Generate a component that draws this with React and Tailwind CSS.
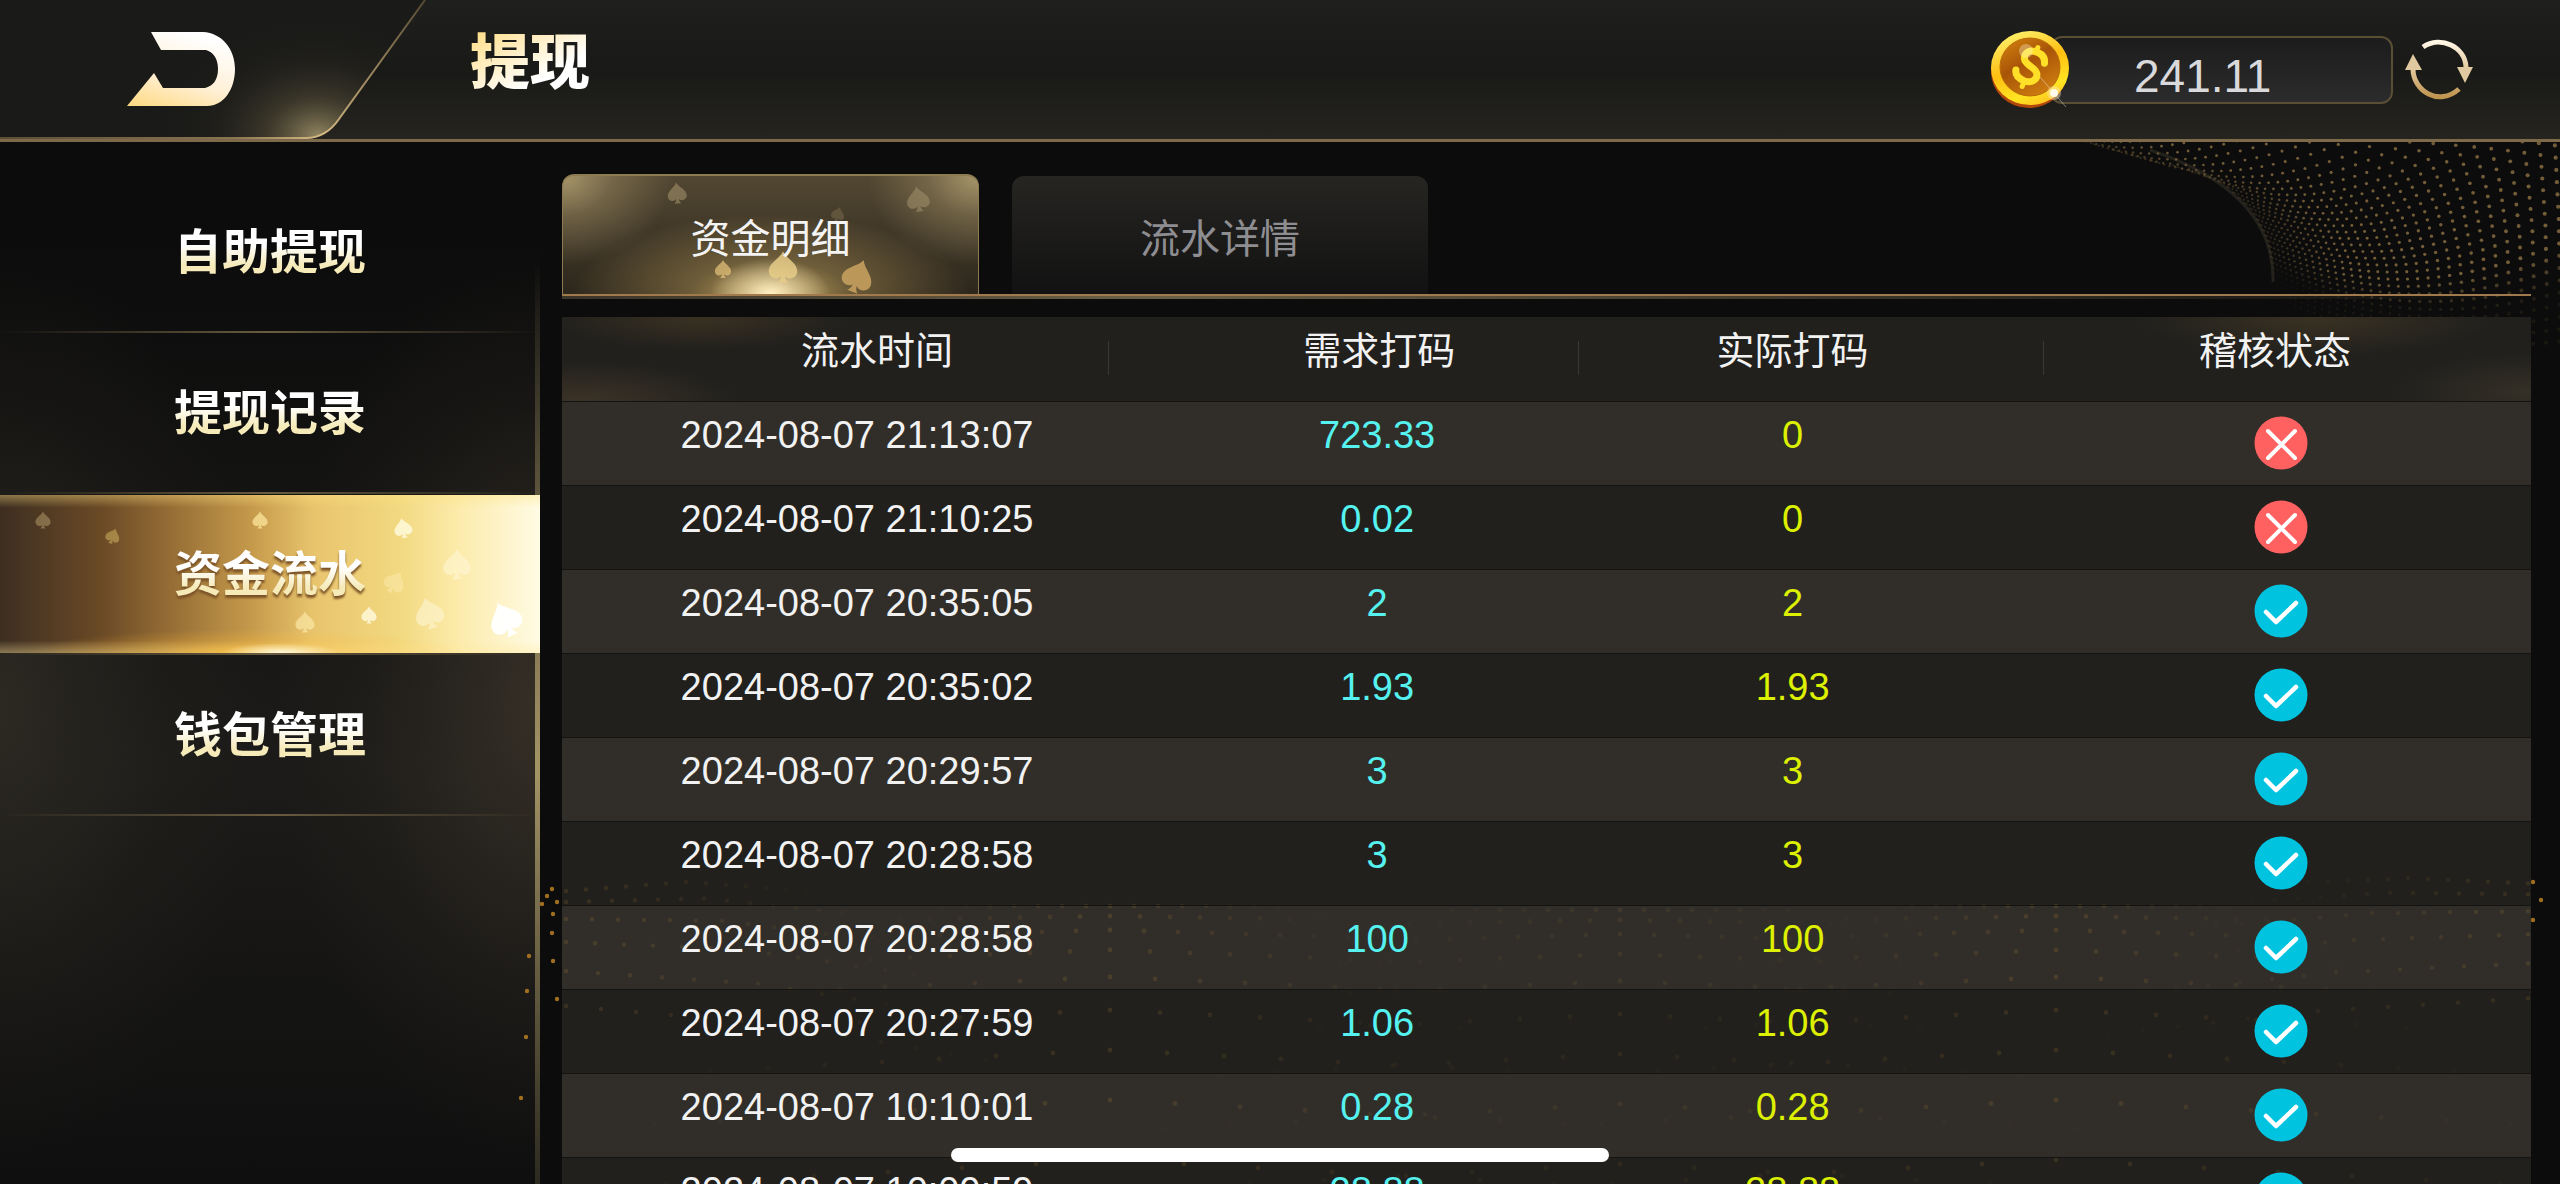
import React from "react";

const SANS = "font-['Liberation_Sans','Noto_Sans_CJK_SC',sans-serif]";

const MENU = [
  { label: "自助提现" },
  { label: "提现记录" },
  { label: "资金流水", active: true },
  { label: "钱包管理" },
];

const ROWS = [
  ["2024-08-07 21:13:07", "723.33", "0", false],
  ["2024-08-07 21:10:25", "0.02", "0", false],
  ["2024-08-07 20:35:05", "2", "2", true],
  ["2024-08-07 20:35:02", "1.93", "1.93", true],
  ["2024-08-07 20:29:57", "3", "3", true],
  ["2024-08-07 20:28:58", "3", "3", true],
  ["2024-08-07 20:28:58", "100", "100", true],
  ["2024-08-07 20:27:59", "1.06", "1.06", true],
  ["2024-08-07 10:10:01", "0.28", "0.28", true],
  ["2024-08-07 10:09:59", "28.88", "28.88", true],
];

const SPADE =
  "M12 1C10 6 2 9 2 15a5 5 0 0 0 8.6 3.4C10.6 20 9.6 22 8.4 23h7.2c-1.2-1-2.2-3-2.2-4.6A5 5 0 0 0 22 15C22 9 14 6 12 1z";

function Spades({ items }) {
  return items.map(([x, y, size, tilt, fill, opacity], i) => (
    <path
      key={i}
      d={SPADE}
      fill={fill}
      opacity={opacity}
      transform={`translate(${x} ${y}) rotate(${tilt}) scale(${size / 21}) translate(-12 -12)`}
    />
  ));
}

/* Dotted mesh that curls in from the top right corner */
const EDGE = [
  [100, 1990], [140, 2080], [160, 2150], [167, 2180], [183, 2223],
  [210, 2252], [240, 2268], [270, 2273], [300, 2270], [340, 2262],
];
function edgeX(y) {
  for (let i = 1; i < EDGE.length; i++) {
    if (y <= EDGE[i][0]) {
      const [y0, x0] = EDGE[i - 1];
      const [y1, x1] = EDGE[i];
      return x0 + ((x1 - x0) * (y - y0)) / (y1 - y0);
    }
  }
  return 2260;
}
function meshDots() {
  const dots = [];
  for (let k = 0; k < 40; k++) {
    const endY = -210 + k * 14;
    const sy = 200 + (endY - 90) / 2.6;
    const sx = edgeX(sy);
    const cy = sy + 48 + (k / 40) * 24;
    for (let n = 0; n <= 36; n++) {
      const t = Math.pow(n / 36, 1.4);
      const x = (1 - t) * (1 - t) * sx + 2 * t * (1 - t) * (sx + 150) + t * t * 2600;
      const y = (1 - t) * (1 - t) * sy + 2 * t * (1 - t) * cy + t * t * endY;
      if (y < 140 || x > 2562) continue;
      const fade = k > 31 ? Math.max(0.15, 1 - (k - 31) * 0.2) : 1;
      dots.push([x - 2060, y - 142, 1.1 + t * 1.1, (0.2 + Math.min(t * 2, 0.5)) * fade]);
    }
  }
  return dots;
}
const MESH = meshDots();

/* Rolling dotted floor along the bottom edge */
function floorDots() {
  const dots = [];
  const rows = [[46, 24], [56, 30], [70, 34], [90, 40], [117, 45], [150, 50], [190, 57], [240, 65], [300, 74]];
  [[1110, 0], [1620, 4], [2056, 0]].forEach(([cx, dy], c) => {
    rows.forEach(([y, gap], r) => {
      for (let j = -7; j <= 7; j++) {
        const fade = Math.max(0, 1 - Math.abs(j) / 8);
        dots.push([cx + j * gap, y + dy + (Math.abs(j) * r) / 2, 2.4, fade * (c === 1 ? 0.5 : 0.9)]);
      }
    });
  });
  for (let r = 0; r < 6; r++) {
    for (let j = 0; j < 13; j++) {
      const y = 22 + r * 8 + r * r * 3;
      const fade = 1 - j / 14;
      const swing = Math.abs(j - 6) * 1.5;
      const left = 566 + j * (20 + r * 3);
      const right = 2528 - j * (20 + r * 3);
      dots.push([left, y + swing + j * r * 0.9, 2.2, fade * 0.9]);
      dots.push([right, y + swing * 0.6 + j * r * 0.6 - 4, 2.2, fade * 0.8]);
    }
  }
  [
    [552, 29], [547, 36], [542, 44], [557, 42], [553, 54], [552, 73], [553, 101], [557, 139],
    [529, 96], [527, 131], [526, 177], [521, 238], [2533, 22], [2541, 40], [2533, 60],
  ].forEach(([x, y]) => dots.push([x, y, 2.2, 0.95]));
  return dots;
}
const FLOOR = floorDots();

function StatusIcon({ ok }) {
  return (
    <svg className="mx-auto block size-[54px]" viewBox="0 0 54 54" role="img" aria-label={ok ? "通过" : "未通过"}>
      <circle cx="27" cy="27" r="26.5" fill={ok ? "#00c3e0" : "#ff6161"} />
      {ok ? (
        <path d="M12 28 22 38 42 19" fill="none" stroke="#fff" strokeWidth="4.500" strokeLinecap="round" strokeLinejoin="round" />
      ) : (
        <path d="M14 15 41 42M41 15 14 42" fill="none" stroke="#fff" strokeWidth="4" strokeLinecap="round" />
      )}
    </svg>
  );
}

function Header() {
  return (
    <header className="relative z-10 flex h-[142px] shrink-0 items-center justify-between border-b-[3px] border-[#7d6a4a] bg-linear-to-b from-[#1f1f1e] via-[#191917] to-[#25241f]">
      <div className="flex h-full items-center">
        <button type="button" aria-label="返回" className="relative h-full w-[430px]">
          <svg className="absolute top-0 left-0 h-[142px] w-[430px]" viewBox="0 0 430 142">
            <defs>
              <radialGradient id="glow" gradientUnits="userSpaceOnUse" cx="318" cy="136" r="150" gradientTransform="translate(0 34) scale(1 .75)">
                <stop offset="0" stopColor="#a8996e" stopOpacity=".85" />
                <stop offset=".35" stopColor="#6b6144" stopOpacity=".4" />
                <stop offset=".7" stopColor="#3a3628" stopOpacity=".15" />
                <stop offset="1" stopColor="#2a2820" stopOpacity="0" />
              </radialGradient>
              <linearGradient id="rim" x1="0" x2="1">
                <stop offset="0" stopColor="#5c4d34" />
                <stop offset=".55" stopColor="#8a7450" />
                <stop offset=".76" stopColor="#d8bb85" />
                <stop offset="1" stopColor="#574a34" />
              </linearGradient>
            </defs>
            <path d="M0 0H425L339 119Q326 138 306 138H0z" fill="#1a1a18" />
            <path d="M0 0H425L339 119Q326 138 306 138H0z" fill="url(#glow)" />
            <path d="M425 0 339 119Q326 138 306 138H0" fill="none" stroke="url(#rim)" strokeWidth="2" />
          </svg>
          <svg className="absolute top-8 left-[127px] h-[75px] w-[108px]" viewBox="0 0 108 75">
            <defs>
              <linearGradient id="arrow" x1=".1" y1="1" x2=".55" y2="0">
                <stop offset="0" stopColor="#ffdb87" />
                <stop offset=".45" stopColor="#fff0d6" />
                <stop offset="1" stopColor="#ffffff" />
              </linearGradient>
            </defs>
            <path
              d="M24 0H76C95 1 108 17 108 37S97 74 80 74H0L27 41 36 56H78C86 54 91 48 91 37S86 20 79 18H34z"
              fill="url(#arrow)"
            />
          </svg>
        </button>
        <h1 className="bg-linear-to-br from-[#ffe08f] from-20% via-[#fff1cd] via-45% to-white to-65% bg-clip-text pb-3 pl-10 text-[60px] leading-[76px] font-black text-transparent">
          提现
        </h1>
      </div>

      <div className="flex items-center gap-3 pr-[87px]">
        <div className="flex items-center">
          <svg className="relative z-10 -mr-5 h-[78px] w-[80px]" viewBox="0 0 80 78" aria-hidden="true">
            <defs>
              <linearGradient id="coinRim" x1=".3" y1="0" x2=".7" y2="1">
                <stop offset="0" stopColor="#fff06a" />
                <stop offset=".45" stopColor="#ffbe12" />
                <stop offset=".8" stopColor="#ffe522" />
                <stop offset="1" stopColor="#ffc020" />
              </linearGradient>
              <linearGradient id="coinFace" x1="0" y1="0" x2=".6" y2="1">
                <stop offset="0" stopColor="#d8860f" />
                <stop offset=".5" stopColor="#a85408" />
                <stop offset="1" stopColor="#cc7a10" />
              </linearGradient>
            </defs>
            <ellipse cx="39" cy="41" rx="38" ry="36" fill="#b2470c" />
            <ellipse cx="40" cy="37" rx="39" ry="37" fill="url(#coinRim)" />
            <ellipse cx="40" cy="36" rx="30" ry="29" fill="url(#coinFace)" stroke="#b86a08" strokeWidth="1" />
            <g transform="rotate(22 40 36)" fill="none" stroke="#ffdf28" strokeLinecap="round">
              <path d="M52 27C50 20 44 19 38 20C31 21 29 28 33 32C38 36 47 35 49 40C52 46 46 51 40 51C33 51 29 48 28 44" strokeWidth="7" />
              <path d="M40 15V20M40 52V57" strokeWidth="5" />
            </g>
            <circle cx="36" cy="20" r="7" fill="#fff8d0" opacity=".35" />
            <path d="M50 46 76 76" stroke="#fff" strokeWidth="1" opacity=".4" />
            <circle cx="64" cy="62" r="7" fill="#ffe9b0" opacity=".45" />
            <circle cx="64" cy="62" r="4" fill="#fffbe8" />
          </svg>
          <output className="block h-[68px] w-[343px] rounded-xl border-2 border-[#5a4e35] bg-linear-to-b from-[#1c1c1c] to-[#2c2c2c] pt-2 pl-[82px] text-[46px] leading-[60px] text-[#d9d9dc]">
            241.11
          </output>
        </div>
        <button type="button" aria-label="刷新">
          <svg className="h-[62px] w-[68px]" viewBox="0 0 68 62">
            <defs>
              <linearGradient id="spin" x1="0" y1="0" x2="0" y2="1">
                <stop offset="0" stopColor="#fff6e4" />
                <stop offset=".5" stopColor="#e2c79b" />
                <stop offset="1" stopColor="#bf9550" />
              </linearGradient>
            </defs>
            <path d="M18 8C36-4 60 8 61 28M8 30C8 52 34 68 54 50" fill="none" stroke="url(#spin)" strokeWidth="5" />
            <path d="M0 31 8 15 17 31zM52 28H68L60 44z" fill="#e0c8a0" />
          </svg>
        </button>
      </div>
    </header>
  );
}

function Sidebar() {
  return (
    <aside className="relative w-[540px] shrink-0 bg-linear-to-b from-[#0c0c0c] from-10% via-[#1c1b19] via-60% to-[#0f0f0f] pt-[30px]">
      <div className="absolute inset-0 bg-[radial-gradient(ellipse_260px_460px_at_100%_54%,#352f26_0%,#352f2699_30%,#352f2633_65%,transparent_100%),radial-gradient(ellipse_260px_460px_at_0%_54%,#2c2922_0%,#2c292299_30%,#2c292233_65%,transparent_100%)]" />
      <div className="absolute top-30 right-0 bottom-0 w-[5px] bg-linear-to-b from-transparent via-[#a39465] via-55% to-[#2c291f]" />
      <nav className="relative">
        {MENU.map((item) => (
          <button
            key={item.label}
            type="button"
            aria-current={item.active ? "page" : undefined}
            className="relative flex h-[161px] w-full items-center justify-center text-[48px] font-bold"
          >
            {item.active && (
              <>
                <span className="absolute inset-x-0 top-px bottom-[2px] bg-[linear-gradient(90deg,#3d2e21_0%,#6b4a26_19%,#9a7137_33%,#c79b4c_47%,#e8c46d_58%,#f2d981_74%,#fcebab_85%,#fffbe4_100%)]" />
                <span className="absolute inset-x-0 top-px bottom-[2px] bg-[radial-gradient(ellipse_60px_10px_at_52%_100%,#fffbe0_0%,transparent_100%),radial-gradient(ellipse_220px_24px_at_46%_100%,#ffc03ccc_0%,#ffc03c55_40%,transparent_100%),linear-gradient(180deg,#ffe28066_0%,transparent_8%,transparent_92%,#ffe9a066_100%)]" />
                <svg className="absolute top-0 left-0 h-[158px] w-[540px]" viewBox="0 0 540 158" aria-hidden="true">
                  <Spades
                    items={[
                      [43, 26, 16, 0, "#b8a270", 0.5],
                      [113, 42, 15, 20, "#d0b060", 0.55],
                      [260, 26, 16, 0, "#ffeaa0", 0.7],
                      [403, 34, 19, -10, "#fffbe0", 0.8],
                      [457, 70, 29, 0, "#fff8d8", 0.55],
                      [395, 88, 22, 30, "#fff0bc", 0.4],
                      [429, 119, 30, -15, "#fff8d8", 0.55],
                      [505, 125, 34, -25, "#ffffff", 0.95],
                      [369, 121, 16, 0, "#fffbe0", 0.8],
                      [305, 128, 20, 0, "#ffeeb0", 0.6],
                    ]}
                  />
                </svg>
              </>
            )}
            <span className={item.active ? "relative drop-shadow-[0_3px_1px_#7a5226]" : "relative"}>
              <span className="bg-linear-to-b from-white from-35% to-[#f6eab8] to-75% bg-clip-text text-transparent">{item.label}</span>
            </span>
            <span className="absolute inset-x-0 bottom-0 h-[2px] bg-linear-to-r from-transparent via-[#6a5c40] to-transparent" />
          </button>
        ))}
      </nav>
    </aside>
  );
}

function Tabs() {
  return (
    <div>
      <div role="tablist" className="flex h-[120px] items-end gap-[33px] text-[40px]">
        <button
          type="button"
          role="tab"
          aria-selected="true"
          className="relative h-full w-[417px] overflow-hidden rounded-t-xl border-x border-t-2 border-[#8d7b52] bg-[radial-gradient(ellipse_60px_36px_at_50%_100%,#fff0c4_0%,#fff0c488_40%,transparent_100%),radial-gradient(ellipse_200px_80px_at_50%_100%,#c8a860_0%,#c8a86066_40%,transparent_100%),radial-gradient(ellipse_110px_90px_at_0%_0%,#a8966a_0%,#a8966a66_45%,transparent_100%),radial-gradient(ellipse_110px_90px_at_100%_0%,#a8966a_0%,#a8966a66_45%,transparent_100%),linear-gradient(180deg,#524732,#2c261c)] pt-2 text-[#f4f4f4]"
        >
          <svg className="absolute top-0 left-0 h-[120px] w-[417px]" viewBox="0 0 417 120" aria-hidden="true">
            <Spades
              items={[
                [114, 17, 20, -5, "#a89870", 0.55],
                [355, 23, 24, -8, "#a89870", 0.5],
                [275, 38, 14, 15, "#8a7a58", 0.4],
                [160, 93, 17, 0, "#e0bf78", 0.75],
                [220, 91, 30, 0, "#e8cc88", 0.85],
                [295, 100, 32, 20, "#c09c5c", 0.95],
              ]}
            />
          </svg>
          <span className="relative">资金明细</span>
        </button>
        <button
          type="button"
          role="tab"
          aria-selected="false"
          className="h-[118px] w-[416px] rounded-t-xl bg-linear-to-b from-[#262522] to-[#121212] pt-2 text-[#8e8e92]"
        >
          流水详情
        </button>
      </div>
      <div className="h-[2px] bg-[#a07a4c]" />
      <div className="h-[3px] bg-linear-to-r from-[#3a3528] via-[#6b6046] via-30% to-transparent" />
    </div>
  );
}

function Records() {
  return (
    <table className="mt-[18px] w-full table-fixed border-collapse text-center text-[38px] leading-[44px] text-[#f2f2f2]">
      <colgroup>
        <col className="w-[32%]" />
        <col className="w-[19%]" />
        <col className="w-[23%]" />
        <col />
      </colgroup>
      <thead>
        <tr className="h-[84px] bg-[#21201d] bg-[radial-gradient(ellipse_150px_34px_at_7%_0%,#3a3122_0%,transparent_100%),radial-gradient(ellipse_160px_40px_at_1%_100%,#3c3327_0%,transparent_100%),radial-gradient(ellipse_180px_40px_at_89%_0%,#3a3223_0%,transparent_100%),radial-gradient(ellipse_140px_40px_at_100%_90%,#353027_0%,transparent_100%)]">
          <th scope="col" className="relative pb-4 font-normal">
            流水时间
            <span className="absolute top-6 right-[83px] h-[34px] w-px bg-[#3b3833]" />
          </th>
          <th scope="col" className="pb-4 font-normal">需求打码</th>
          <th scope="col" className="relative pb-4 font-normal">
            <span className="absolute top-6 left-3 h-[34px] w-px bg-[#3b3833]" />
            实际打码
          </th>
          <th scope="col" className="relative pb-4 font-normal">
            <span className="absolute top-6 left-6 h-[34px] w-px bg-[#3b3833]" />
            稽核状态
          </th>
        </tr>
      </thead>
      <tbody>
        {ROWS.map(([time, need, real, ok]) => (
          <tr key={time + need} className="h-[84px] border-t border-[#131312] odd:bg-[#39362f]/82 even:bg-[#262521]/82">
            <td className="pr-10 pb-4">{time}</td>
            <td className="pr-1 pb-4 text-[#55f2f0]">{need}</td>
            <td className="pb-4 text-[#dcf000]">{real}</td>
            <td className="pl-3">
              <StatusIcon ok={ok} />
            </td>
          </tr>
        ))}
      </tbody>
    </table>
  );
}

export default function App() {
  return (
    <div className={`relative flex h-screen flex-col overflow-hidden bg-[#0c0c0c] ${SANS}`}>
      <Header />
      <div className="relative flex min-h-0 flex-1">
        <svg className="absolute top-0 right-0 h-[280px] w-[500px]" viewBox="0 0 500 280" aria-hidden="true">
          <path d="M90 8Q215 50 213 140" fill="none" stroke="#3a362b" strokeWidth="3" opacity=".5" />
          {MESH.map(([x, y, r, o], i) => (
            <circle key={i} cx={x} cy={y} r={r} fill="#a0804c" opacity={o} />
          ))}
        </svg>
        <Sidebar />
        <svg className="pointer-events-none absolute bottom-0 left-0 h-[324px] w-full" viewBox="0 0 2560 324" preserveAspectRatio="none" aria-hidden="true">
          {FLOOR.map(([x, y, r, o], i) => (
            <circle key={i} cx={x} cy={y} r={r} fill="#a87420" opacity={o} />
          ))}
        </svg>
        <main className="relative min-w-0 flex-1 pt-8 pr-[29px] pl-[22px]">
          <Tabs />
          <Records />
        </main>
      </div>
      <div className="absolute bottom-[22px] left-1/2 z-20 h-[14px] w-[658px] -translate-x-1/2 rounded-full bg-white" />
    </div>
  );
}
